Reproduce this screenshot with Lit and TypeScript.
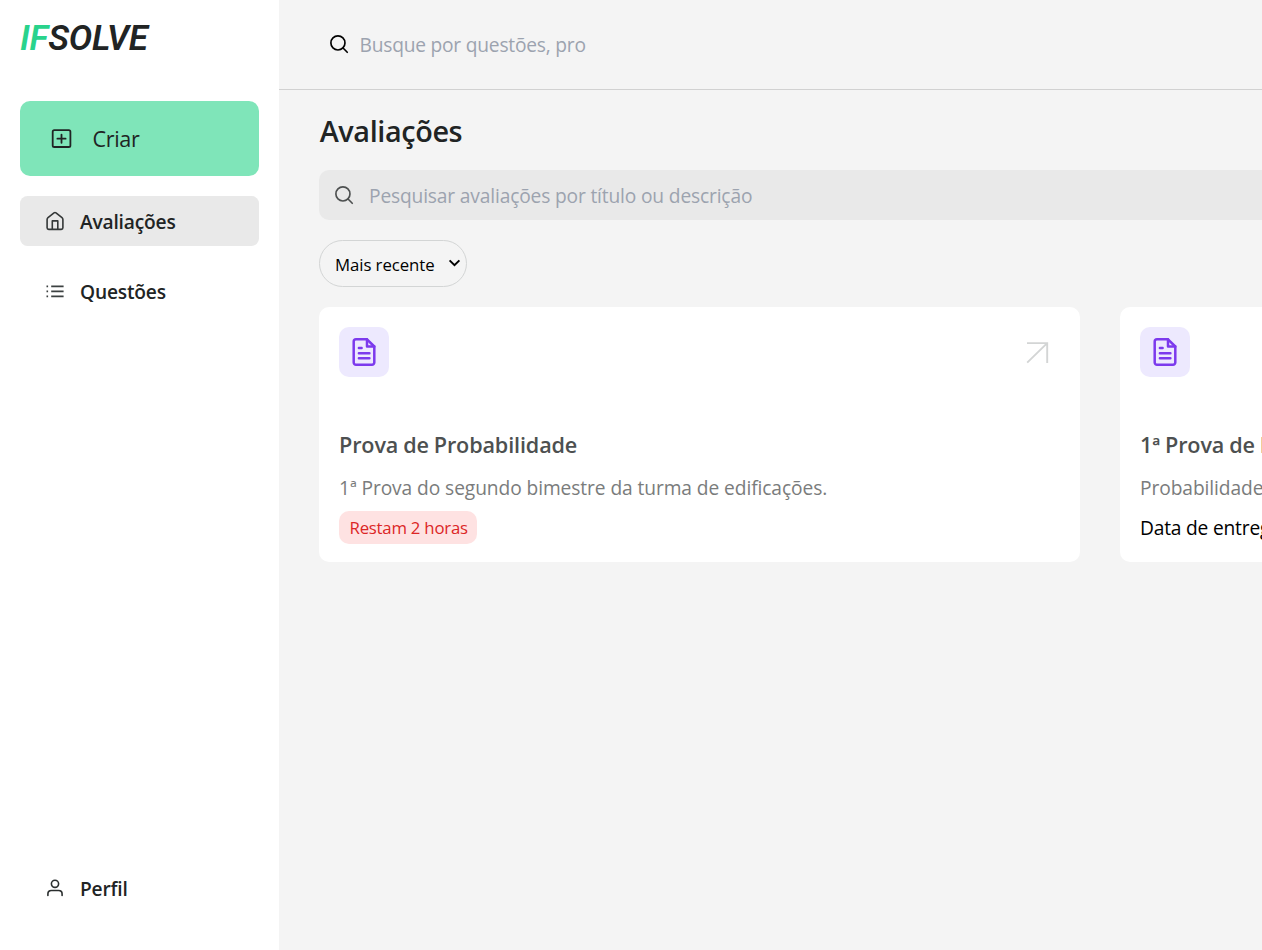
import { LitElement, html, svg, css, nothing } from "lit";
import { customElement, property } from "lit/decorators.js";
import { classMap } from "lit/directives/class-map.js";

const searchGlyph = svg`<circle cx="113" cy="113" r="80" /><path d="M171 171L219 219" />`;

const iconHouse = html`<svg class="i20" viewBox="0 0 20 20" fill="none" stroke="#343838" stroke-width="1.6" stroke-linejoin="round" stroke-linecap="round">
  <path d="M2.1 8.6C2.1 7.8 2.3 7.3 3 6.7L9 1.9c.6-.5 1.4-.5 2 0l6 4.8c.7.6.9 1.1.9 1.9v8.2c0 1-.6 1.6-1.6 1.6H3.7c-1 0-1.6-.6-1.6-1.6z" />
  <path d="M7.3 18.2V9.9h5.5v8.3" />
</svg>`;
const iconList = html`<svg class="i20" viewBox="0 0 20 20" fill="none" stroke="#3c4141" stroke-width="1.7">
  <path d="M6.2 5.3H18.6M6.2 10.3H18.6M6.2 15.3H18.6M1.5 5.3H3.1M1.5 10.3H3.1M1.5 15.3H3.1" />
</svg>`;
const iconUser = html`<svg class="i20" viewBox="0 0 20 20" fill="none" stroke="#2b2f2f" stroke-width="1.6" stroke-linecap="round">
  <circle cx="10" cy="5.8" r="3.6" />
  <path d="M2.9 17.4v-1.5c0-2.1 1.5-3.4 3.5-3.4h7.2c2 0 3.5 1.3 3.5 3.4v1.5" />
</svg>`;
const iconFile = html`<svg class="file" viewBox="0 0 50 50" fill="none" stroke="#7c3aed" stroke-width="2.5" stroke-linejoin="round" stroke-linecap="round">
  <path d="M28 12.3H17a2.3 2.3 0 0 0-2.3 2.3V35.4A2.3 2.3 0 0 0 17 37.7H33a2.3 2.3 0 0 0 2.3-2.3V19.5z" />
  <path d="M28 12.3V19.5H35.3M19.9 21H22.6M19.9 26.2H30.4M19.9 31.2H30.4" />
</svg>`;

@customElement("side-bar")
class SideBar extends LitElement {
  static styles = css`
    :host { display: flex; flex-direction: column; box-sizing: border-box; width: 279px; height: 100%; padding: 21px 20px 37px; background: #fff; color: #212424; font-family: "Open Sans", sans-serif; }
    .logo { font: italic 600 35px/36px Roboto, sans-serif; letter-spacing: -0.15px; height: 80px; box-sizing: border-box; white-space: nowrap; }
    .logo span { color: #29d38c; }
    .create { display: flex; align-items: center; height: 75px; padding-left: 30px; gap: 20px; border-radius: 10px; background: #7fe5b9; font-size: 21.6px; letter-spacing: -0.35px; line-height: 30px; }
    .create svg { width: 22.5px; height: 22.5px; }
    nav { display: flex; flex-direction: column; gap: 20px; margin-top: 20px; }
    .item { display: flex; align-items: center; height: 50px; padding-left: 25px; gap: 15px; border-radius: 7.5px; font-size: 19.2px; font-weight: 580; letter-spacing: -0.2px; line-height: 30px; }
    .item span { padding-top: 2px; }
    .item.active { background: #e9e9e9; }
    .i20 { width: 20px; height: 20px; flex: none; }
    .foot { margin-top: auto; }
  `;
  private item(icon: unknown, label: string, active = false) {
    return html`<div class=${classMap({ item: true, active })}>${icon}<span>${label}</span></div>`;
  }
  render() {
    return html`
      <div class="logo"><span>IF</span>SOLVE</div>
      <div class="create">
        <svg viewBox="0 0 22.5 22.5" fill="none" stroke="#212424" stroke-width="1.8" stroke-linecap="round">
          <rect x="2.7" y="3.1" width="17.7" height="16.9" rx="1.6" /><path d="M7.4 11.7h8.2M11.5 7.6v8.2" />
        </svg>
        <span>Criar</span>
      </div>
      <nav>${this.item(iconHouse, "Avaliações", true)}${this.item(iconList, "Questões")}</nav>
      <div class="foot">${this.item(iconUser, "Perfil")}</div>
    `;
  }
}

@customElement("exam-card")
class ExamCard extends LitElement {
  @property() heading = "";
  @property() description = "";
  @property() due = "";
  @property() remaining = "";
  static styles = css`
    :host { display: block; box-sizing: border-box; height: 255px; padding: 20px; border-radius: 10px; background: #fff; font-family: "Open Sans", sans-serif; white-space: nowrap; }
    .top { display: flex; justify-content: space-between; align-items: flex-start; height: 100px; }
    .badge { width: 50px; height: 50px; border-radius: 10px; background: #ede9fe; }
    .file { display: block; width: 50px; height: 50px; }
    .arrow { width: 25px; height: 25px; margin: 13px 10px 0 0; }
    h2 { margin: 0; font-size: 21.6px; line-height: 36px; font-weight: 580; letter-spacing: -0.13px; word-spacing: -0.5px; color: #4d5050; }
    p { margin: 10px 0 0; font-size: 19.2px; line-height: 30px; letter-spacing: -0.09px; color: #7a7c7c; }
    .due { margin-top: 10px; font-size: 19.2px; line-height: 30px; letter-spacing: -0.2px; color: #000; }
    .remaining { display: inline-block; box-sizing: border-box; width: 138px; height: 33px; margin-top: 8px; padding-left: 10.5px; border-radius: 10px; background: #fee2e2; color: #dc2626; font-size: 16.8px; line-height: 34px; letter-spacing: -0.23px; }
  `;
  render() {
    return html`
      <div class="top">
        <div class="badge">${iconFile}</div>
        <svg class="arrow" viewBox="0 0 25 25" fill="none" stroke="#d3d5d5" stroke-width="1.9"><path d="M2 3.1H22.2V23M22.2 3.1L2.2 22.6" /></svg>
      </div>
      <h2>${this.heading}</h2>
      <p>${this.description}</p>
      ${this.remaining ? html`<div class="remaining">${this.remaining}</div>` : nothing}
      ${this.due ? html`<div class="due">${this.due}</div>` : nothing}
    `;
  }
}

@customElement("app-root")
class AppRoot extends LitElement {
  static styles = css`
    :host { display: grid; grid-template-columns: 279px minmax(0, 1fr); height: 100vh; overflow: hidden; background: #f4f4f4; font-family: "Open Sans", sans-serif; color: #212424; }
    header { display: flex; align-items: center; box-sizing: border-box; height: 90px; padding-left: 49px; gap: 9px; border-bottom: 1px solid #d1d1d1; }
    .glass { width: 22.5px; height: 22.5px; flex: none; fill: none; stroke: #000; stroke-width: 19; stroke-linecap: round; }
    .ph { padding-top: 1px; font-size: 19.2px; line-height: 30px; color: #9ca3af; white-space: nowrap; letter-spacing: -0.16px; }
    .ph.short { letter-spacing: -0.22px; }
    main { padding: 20px 0 0 40px; }
    h1 { margin: 0; padding-left: 0.7px; font-size: 28.8px; line-height: 42px; font-weight: 580; letter-spacing: -0.38px; }
    .search { display: flex; align-items: center; box-sizing: border-box; width: 1561px; height: 50px; margin-top: 18px; padding-left: 14px; gap: 13.5px; border-radius: 10px; background: #e9e9e9; }
    .search .glass { stroke: #4d5050; }
    .search .ph { padding-top: 2px; }
    .select { display: flex; align-items: center; justify-content: space-between; box-sizing: border-box; width: 148px; height: 47px; margin-top: 20px; padding: 2px 5px 0 15px; border: 1px solid #d3d5d5; border-radius: 23.5px; color: #000; font-size: 16.8px; line-height: 26px; letter-spacing: -0.08px; }
    .select svg { width: 13px; height: 10px; margin-top: -3px; }
    .cards { display: grid; grid-template-columns: 761px 761px; gap: 40px; margin-top: 20px; }
  `;
  render() {
    return html`
      <side-bar></side-bar>
      <div>
        <header>
          <svg class="glass" viewBox="0 0 256 256">${searchGlyph}</svg>
          <span class="ph short">Busque por questões, pro</span>
        </header>
        <main>
          <h1>Avaliações</h1>
          <div class="search">
            <svg class="glass" viewBox="0 0 256 256">${searchGlyph}</svg>
            <span class="ph">Pesquisar avaliações por título ou descrição</span>
          </div>
          <div class="select">
            <span>Mais recente</span>
            <svg viewBox="0 0 13 10" fill="none" stroke="#000" stroke-width="2"><path d="M1.6 2.4L6.5 7.2L11.4 2.4" /></svg>
          </div>
          <div class="cards">
            <exam-card heading="Prova de Probabilidade" description="1ª Prova do segundo bimestre da turma de edificações." remaining="Restam 2 horas"></exam-card>
            <exam-card heading="1ª Prova de Probabilidade" description="Probabilidade" due="Data de entrega"></exam-card>
          </div>
        </main>
      </div>
    `;
  }
}
